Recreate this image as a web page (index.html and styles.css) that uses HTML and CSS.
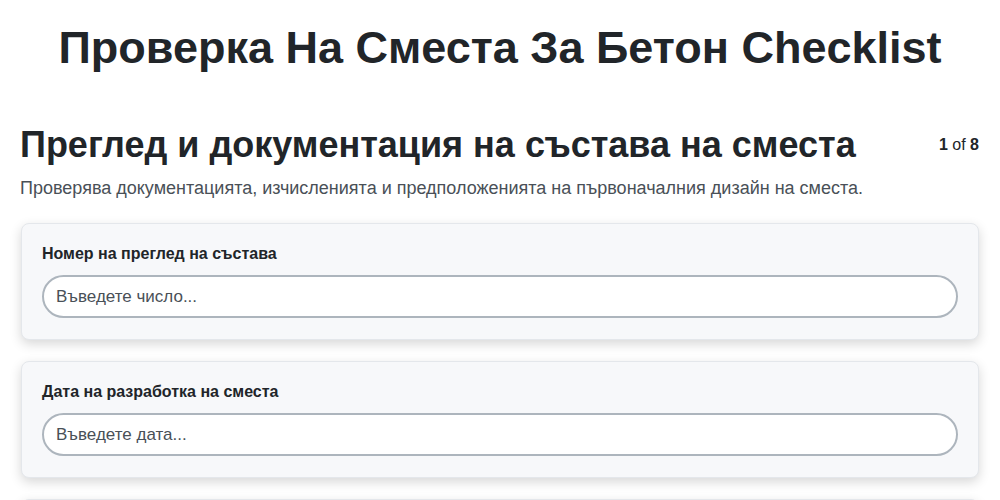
FILE: index.html
```html
<!DOCTYPE html>
<html lang="bg">
<head>
<meta charset="utf-8">
<title>Проверка На Сместа За Бетон Checklist</title>
<link rel="stylesheet" href="styles.css">
</head>
<body>
<main class="page">
  <h1 class="title">Проверка На Сместа За Бетон Checklist</h1>
  <section class="section">
    <div class="section-head">
      <h2 class="section-title">Преглед и документация на състава на сместа</h2>
      <div class="pager"><b>1</b> of <b>8</b></div>
    </div>
    <p class="section-desc">Проверява документацията, изчисленията и предположенията на първоначалния дизайн на сместа.</p>
    <div class="card">
      <label class="field-label" for="f1">Номер на преглед на състава</label>
      <input class="field-input" id="f1" type="text" placeholder="Въведете число...">
    </div>
    <div class="card">
      <label class="field-label" for="f2">Дата на разработка на сместа</label>
      <input class="field-input" id="f2" type="text" placeholder="Въведете дата...">
    </div>
    <div class="card card-next" aria-hidden="true">
      <input class="field-input" type="text">
    </div>
  </section>
</main>
</body>
</html>
```
FILE: styles.css
```css
* { box-sizing: border-box; }
body {
  margin: 0;
  background: #ffffff;
  font-family: "Liberation Sans", Arial, sans-serif;
  color: #212529;
}
.page {
  padding: 22px 21px 20px 21px;
}
.title {
  margin: 0;
  font-size: 45px;
  line-height: 52px;
  font-weight: 700;
  text-align: center;
  color: #212529;
}
.section {
  margin-top: 50px;
}
.section-head {
  display: flex;
  align-items: center;
  justify-content: space-between;
}
.section-title {
  margin: 0;
  margin-left: -1px;
  font-size: 36px;
  line-height: 42px;
  font-weight: 700;
  color: #212529;
}
.pager {
  font-size: 16px;
  color: #212529;
  margin-right: 0;
}
.section-desc {
  margin: 9px 0 21px -1px;
  font-size: 18px;
  line-height: 27px;
  color: #495057;
}
.card {
  background: #f7f8fa;
  border: 1px solid #e4e7eb;
  border-radius: 8px;
  padding: 20px 20px 21px 20px;
  margin-bottom: 21px;
  box-shadow: 0 4px 12px rgba(0, 0, 0, 0.16);
}
.card-next {
  padding-top: 51px;
}
.field-label {
  display: block;
  font-size: 16px;
  line-height: 19px;
  font-weight: 700;
  color: #212529;
  margin-bottom: 12px;
}
.field-input {
  display: block;
  width: 100%;
  height: 43px;
  padding: 0 12px;
  border: 2px solid #adb5bd;
  border-radius: 22px;
  background: #ffffff;
  font-family: "Liberation Sans", Arial, sans-serif;
  font-size: 17px;
  color: #212529;
  outline: none;
}
.field-input::placeholder {
  color: #495057;
  opacity: 1;
}
```
